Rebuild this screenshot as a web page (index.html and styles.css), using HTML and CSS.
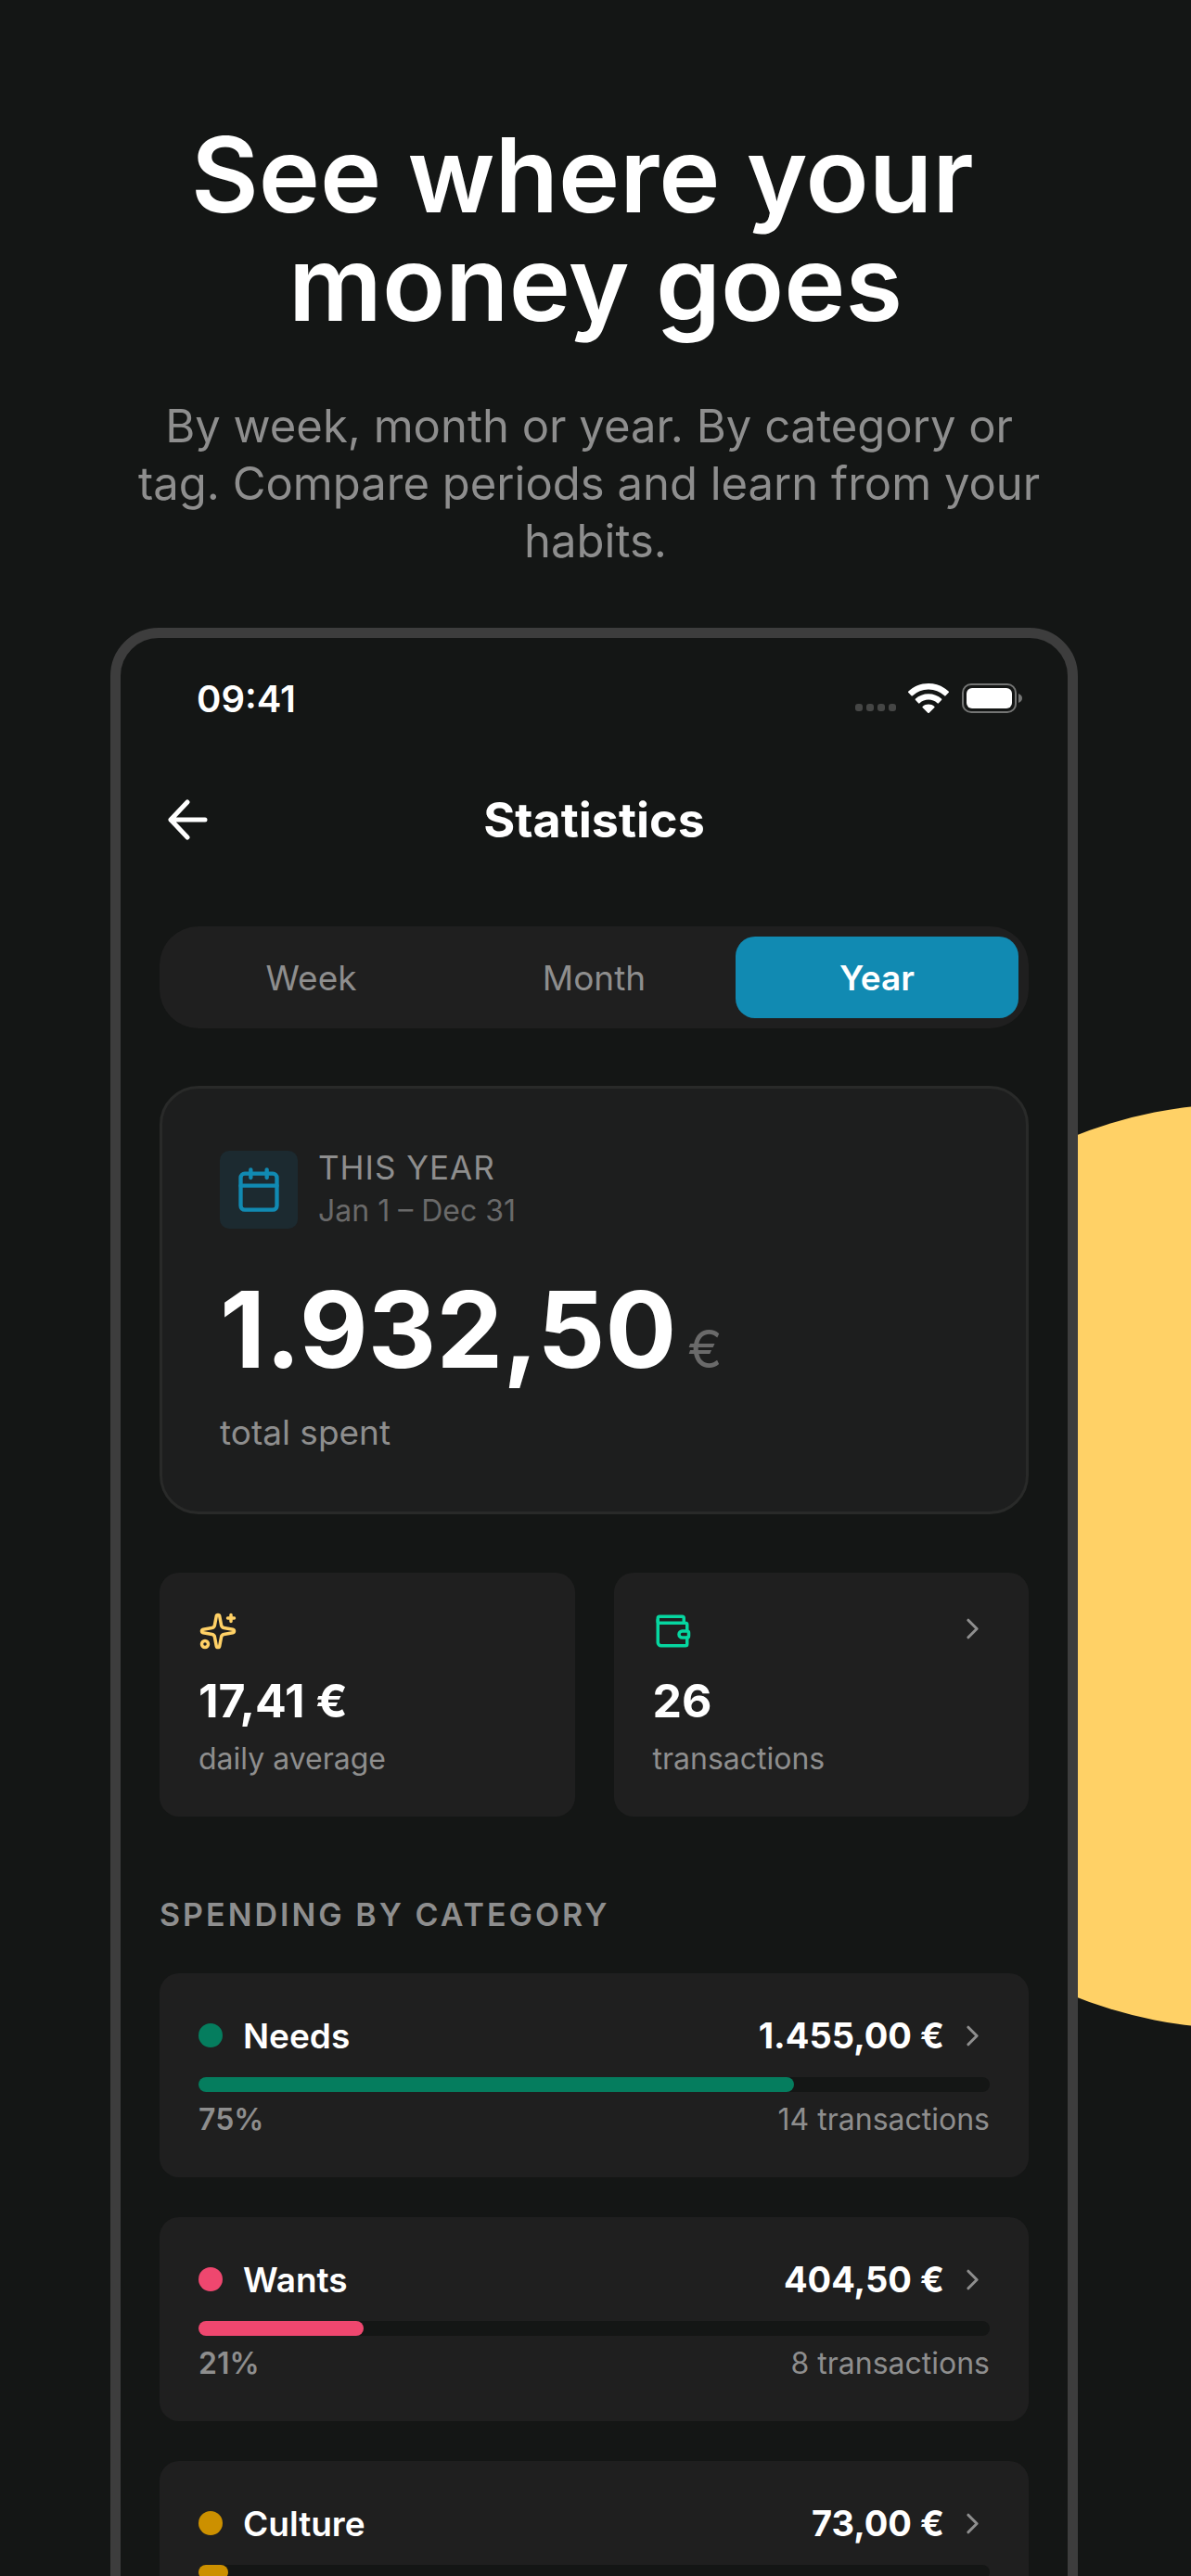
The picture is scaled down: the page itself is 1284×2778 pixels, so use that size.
FILE: index.html
```
<!DOCTYPE html>
<html lang="en">

<head>
  <meta charset="UTF-8">
  <meta name="viewport" content="width=device-width, initial-scale=1.0">
  <title>Statistics</title>
  <link rel="stylesheet" href="styles.css">
</head>

<body>
  <svg class="defs" width="0" height="0" aria-hidden="true">
    <symbol id="chevron" viewBox="0 0 24 24">
      <path d="m9 18 6-6-6-6"></path>
    </symbol>
  </svg>

  <div class="page">
    <div class="circle"></div>

    <div class="hero">
      <h1>See where your&nbsp;<br>money goes</h1>
      <p>By week, month or year. By category or&nbsp;<br>tag. Compare periods and learn from your&nbsp;<br>habits.</p>
    </div>

    <div class="phone">
      <div class="status">
        <span class="time">09:41</span>
        <div class="status-icons">
          <div class="signal"><i></i><i></i><i></i><i></i></div>
          <svg class="wifi" viewBox="0 0 44 32">
            <path d="M22 0C13.500 0 5.800 3.300 0.400 8.600a1 1 0 0 0 0 1.500l3.100 3.100a1 1 0 0 0 1.400 0A24.600 24.600 0 0 1 22 6.400a24.600 24.600 0 0 1 17.100 6.800 1 1 0 0 0 1.400 0l3.100-3.100a1 1 0 0 0 0-1.500C38.200 3.300 30.500 0 22 0z"></path>
            <path d="M22 11.200c-5.400 0-10.300 2-14 5.400a1 1 0 0 0 0 1.500l3.100 3.200a1 1 0 0 0 1.400 0A14 14 0 0 1 22 17.600a14 14 0 0 1 9.500 3.700 1 1 0 0 0 1.400 0l3.100-3.200a1 1 0 0 0 0-1.500c-3.700-3.400-8.600-5.400-14-5.400z"></path>
            <path d="M22 22.400c-2.400 0-4.600.8-6.200 2.300a1 1 0 0 0 0 1.500l5.500 5.500a1 1 0 0 0 1.400 0l5.500-5.500a1 1 0 0 0 0-1.500c-1.600-1.500-3.800-2.300-6.200-2.300z"></path>
          </svg>
          <svg class="battery" viewBox="0 0 66 32">
            <rect class="case" x="1" y="1" width="57" height="30" rx="9"></rect>
            <rect x="5" y="5" width="49" height="22" rx="6"></rect>
            <path class="tip" d="M61 11c2.600 1 4 2.800 4 5s-1.400 4-4 5z"></path>
          </svg>
        </div>
      </div>

      <div class="header">
        <button class="back" aria-label="Back">
          <svg viewBox="0 0 44 44">
            <path d="M22 3 4 22l18 19M4 22h37"></path>
          </svg>
        </button>
        <h2>Statistics</h2>
      </div>

      <div class="tabs">
        <button>Week</button>
        <button>Month</button>
        <button class="current">Year</button>
      </div>

      <div class="summary">
        <div class="period">
          <div class="period-icon">
            <svg viewBox="0 0 24 24">
              <path d="M8 2v4M16 2v4M3 10h18"></path>
              <rect x="3" y="4" width="18" height="18" rx="2"></rect>
            </svg>
          </div>
          <div>
            <div class="period-name">THIS YEAR</div>
            <div class="period-range">Jan 1 – Dec 31</div>
          </div>
        </div>
        <div class="total">1.932,50<span>€</span></div>
        <div class="total-label">total spent</div>
      </div>

      <div class="stats">
        <div class="stat">
          <div class="stat-top">
            <svg class="stat-icon yellow" viewBox="0 0 24 24">
              <path d="M11.017 2.814a1 1 0 0 1 1.966 0l1.051 5.558a2 2 0 0 0 1.594 1.594l5.558 1.051a1 1 0 0 1 0 1.966l-5.558 1.051a2 2 0 0 0-1.594 1.594l-1.051 5.558a1 1 0 0 1-1.966 0l-1.051-5.558a2 2 0 0 0-1.594-1.594l-5.558-1.051a1 1 0 0 1 0-1.966l5.558-1.051a2 2 0 0 0 1.594-1.594z"></path>
              <path d="M20 2v4M22 4h-4"></path>
              <circle cx="4" cy="20" r="2"></circle>
            </svg>
          </div>
          <div class="stat-value">17,41 €</div>
          <div class="stat-label">daily average</div>
        </div>
        <a class="stat" href="#">
          <div class="stat-top">
            <svg class="stat-icon green" viewBox="0 0 24 24">
              <path d="M19 7V4a1 1 0 0 0-1-1H4a1 1 0 0 0-1 1v2a1 1 0 0 0 1 1h16a1 1 0 0 1 1 1v4h-3a2 2 0 0 0 0 4h3a1 1 0 0 0 1-1v-2a1 1 0 0 0-1-1"></path>
              <path d="M3 5v14a2 2 0 0 0 2 2h15a1 1 0 0 0 1-1v-4"></path>
            </svg>
            <svg class="chevron"><use href="#chevron"></use></svg>
          </div>
          <div class="stat-value">26</div>
          <div class="stat-label">transactions</div>
        </a>
      </div>

      <h3>SPENDING BY CATEGORY</h3>

      <div class="list">
        <a class="category needs" href="#">
          <div class="row">
            <span class="dot"></span>
            <span class="name">Needs</span>
            <span class="amount">1.455,00 €</span>
            <svg class="chevron"><use href="#chevron"></use></svg>
          </div>
          <div class="bar"><div class="fill" style="width: 75.3%"></div></div>
          <div class="foot"><b>75%</b><span>14 transactions</span></div>
        </a>
        <a class="category wants" href="#">
          <div class="row">
            <span class="dot"></span>
            <span class="name">Wants</span>
            <span class="amount">404,50 €</span>
            <svg class="chevron"><use href="#chevron"></use></svg>
          </div>
          <div class="bar"><div class="fill" style="width: 20.9%"></div></div>
          <div class="foot"><b>21%</b><span>8 transactions</span></div>
        </a>
        <a class="category culture" href="#">
          <div class="row">
            <span class="dot"></span>
            <span class="name">Culture</span>
            <span class="amount">73,00 €</span>
            <svg class="chevron"><use href="#chevron"></use></svg>
          </div>
          <div class="bar"><div class="fill" style="width: 3.8%"></div></div>
        </a>
      </div>
    </div>
  </div>
</body>

</html>
```
FILE: styles.css
```
* {
  margin: 0;
  padding: 0;
  box-sizing: border-box;
}

body {
  background: #141615;
  color: #fff;
  font-family: Inter, Roboto, sans-serif;
}

button {
  border: 0;
  background: none;
  color: inherit;
  font: inherit;
  cursor: pointer;
}

a {
  color: inherit;
  text-decoration: none;
}

svg {
  display: block;
  flex: none;
}

.defs {
  position: absolute;
}

/* the phone runs off the bottom of the window */
.page {
  position: relative;
  height: 100vh;
  overflow: hidden;
}

.circle {
  position: absolute;
  top: 1190px;
  right: -557px;
  width: 998px;
  height: 998px;
  border-radius: 50%;
  background: #ffd166;
}

.hero {
  padding: 130px 100px 62px;
  text-align: center;
}

.hero h1 {
  font-size: 112px;
  line-height: 117px;
  font-weight: 600;
}

.hero p {
  margin-top: 65px;
  font-size: 49px;
  line-height: 62px;
  color: #8e8e8e;
}

.phone {
  position: relative;
  margin: 0 122px 0 119px;
  padding: 0 42px 42px;
  border: 11px solid #3d3d3d;
  border-radius: 52px;
  background: #141615;
}

.status {
  display: flex;
  align-items: center;
  justify-content: space-between;
  height: 130px;
  padding: 0 6px 0 40px;
}

.time {
  font-size: 40px;
  font-weight: 600;
}

.status-icons {
  display: flex;
  align-items: center;
}

.signal {
  display: flex;
  gap: 4px;
  margin: 20px 13px 0 0;
}

.signal i {
  width: 8px;
  height: 8px;
  border-radius: 3px;
  background: #454645;
}

.wifi {
  width: 44px;
  height: 32px;
  margin-right: 14px;
  fill: #fff;
}

.battery {
  width: 66px;
  height: 32px;
  fill: #fff;
}

.battery .case {
  fill: none;
  stroke: #747574;
  stroke-width: 2;
}

.battery .tip {
  fill: #747574;
}

.header {
  display: grid;
  grid-template-columns: 64px 1fr 64px;
  align-items: center;
  height: 132px;
  margin-bottom: 49px;
}

.back {
  height: 64px;
  padding: 10px 8px;
}

.back svg {
  width: 44px;
  height: 44px;
  fill: none;
  stroke: #fff;
  stroke-width: 5;
  stroke-linecap: round;
  stroke-linejoin: round;
}

.header h2 {
  font-size: 52px;
  font-weight: 700;
  text-align: center;
}

.tabs {
  display: flex;
  padding: 11px;
  border-radius: 42px;
  background: #1f1f1f;
}

.tabs button {
  flex: 1;
  height: 88px;
  border-radius: 21px;
  font-size: 37px;
  color: #8e8e8e;
}

.tabs .current {
  background: #118ab2;
  color: #fff;
  font-weight: 600;
}

.summary {
  margin-top: 62px;
  padding: 62px;
  border: 3px solid #292a29;
  border-radius: 42px;
  background: #1d1e1e;
}

.period {
  display: flex;
  align-items: center;
  gap: 22px;
}

.period-icon {
  padding: 16px;
  border-radius: 10px;
  background: #1c2a30;
}

.period-icon svg {
  width: 52px;
  height: 52px;
  fill: none;
  stroke: #118ab2;
  stroke-width: 2;
  stroke-linecap: round;
}

.period-name {
  font-size: 35px;
  line-height: 46px;
  letter-spacing: 1px;
  color: #8e8e8e;
}

.period-range {
  font-size: 32px;
  line-height: 48px;
  color: #6a6a6a;
}

.total {
  margin-top: 34px;
  font-size: 114px;
  line-height: 140px;
  font-weight: 700;
}

.total span {
  margin-left: 12px;
  font-size: 56px;
  line-height: 58px;
  font-weight: 400;
  color: #6a6a6a;
}

.total-label {
  margin-top: 18px;
  font-size: 37px;
  line-height: 46px;
  color: #8e8e8e;
}

.stats {
  display: grid;
  grid-template-columns: 1fr 1fr;
  gap: 42px;
  margin-top: 63px;
}

.stat {
  padding: 42px;
  border-radius: 21px;
  background: #1f1f1f;
}

.stat-top {
  display: flex;
  justify-content: space-between;
}

.stat-icon {
  width: 42px;
  height: 42px;
  fill: none;
  stroke-width: 2;
  stroke-linecap: round;
  stroke-linejoin: round;
}

.yellow {
  stroke: #ffd166;
}

.green {
  stroke: #06d6a0;
}

.chevron {
  width: 37px;
  height: 37px;
  fill: none;
  stroke: #8e8e8e;
  stroke-width: 2;
  stroke-linecap: round;
  stroke-linejoin: round;
}

.stat-value {
  margin-top: 22px;
  font-size: 50px;
  line-height: 64px;
  font-weight: 700;
}

.stat-label {
  margin-top: 11px;
  font-size: 32px;
  line-height: 40px;
  color: #8e8e8e;
}

h3 {
  margin: 84px 0 41px;
  font-size: 34px;
  line-height: 44px;
  font-weight: 600;
  letter-spacing: 3px;
  color: #8e8e8e;
}

.list {
  display: grid;
  gap: 43px;
}

.category {
  padding: 42px;
  border-radius: 21px;
  background: #1f1f1f;
}

.row {
  display: flex;
  align-items: center;
  height: 50px;
}

.dot {
  width: 26px;
  height: 26px;
  margin-right: 22px;
  border-radius: 50%;
}

.name {
  flex: 1;
  font-size: 37px;
  font-weight: 600;
}

.amount {
  margin-right: 12px;
  font-size: 38px;
  font-weight: 700;
}

.bar {
  height: 16px;
  margin-top: 20px;
  border-radius: 8px;
  background: #141615;
}

.fill {
  height: 16px;
  border-radius: 8px;
}

.needs .dot,
.needs .fill {
  background: #057d5e;
}

.wants .dot,
.wants .fill {
  background: #ef476f;
}

.culture .dot,
.culture .fill {
  background: #cc9000;
}

.foot {
  display: flex;
  justify-content: space-between;
  margin-top: 10px;
  font-size: 32px;
  line-height: 40px;
  color: #8e8e8e;
}

.foot b {
  font-weight: 600;
}
```
